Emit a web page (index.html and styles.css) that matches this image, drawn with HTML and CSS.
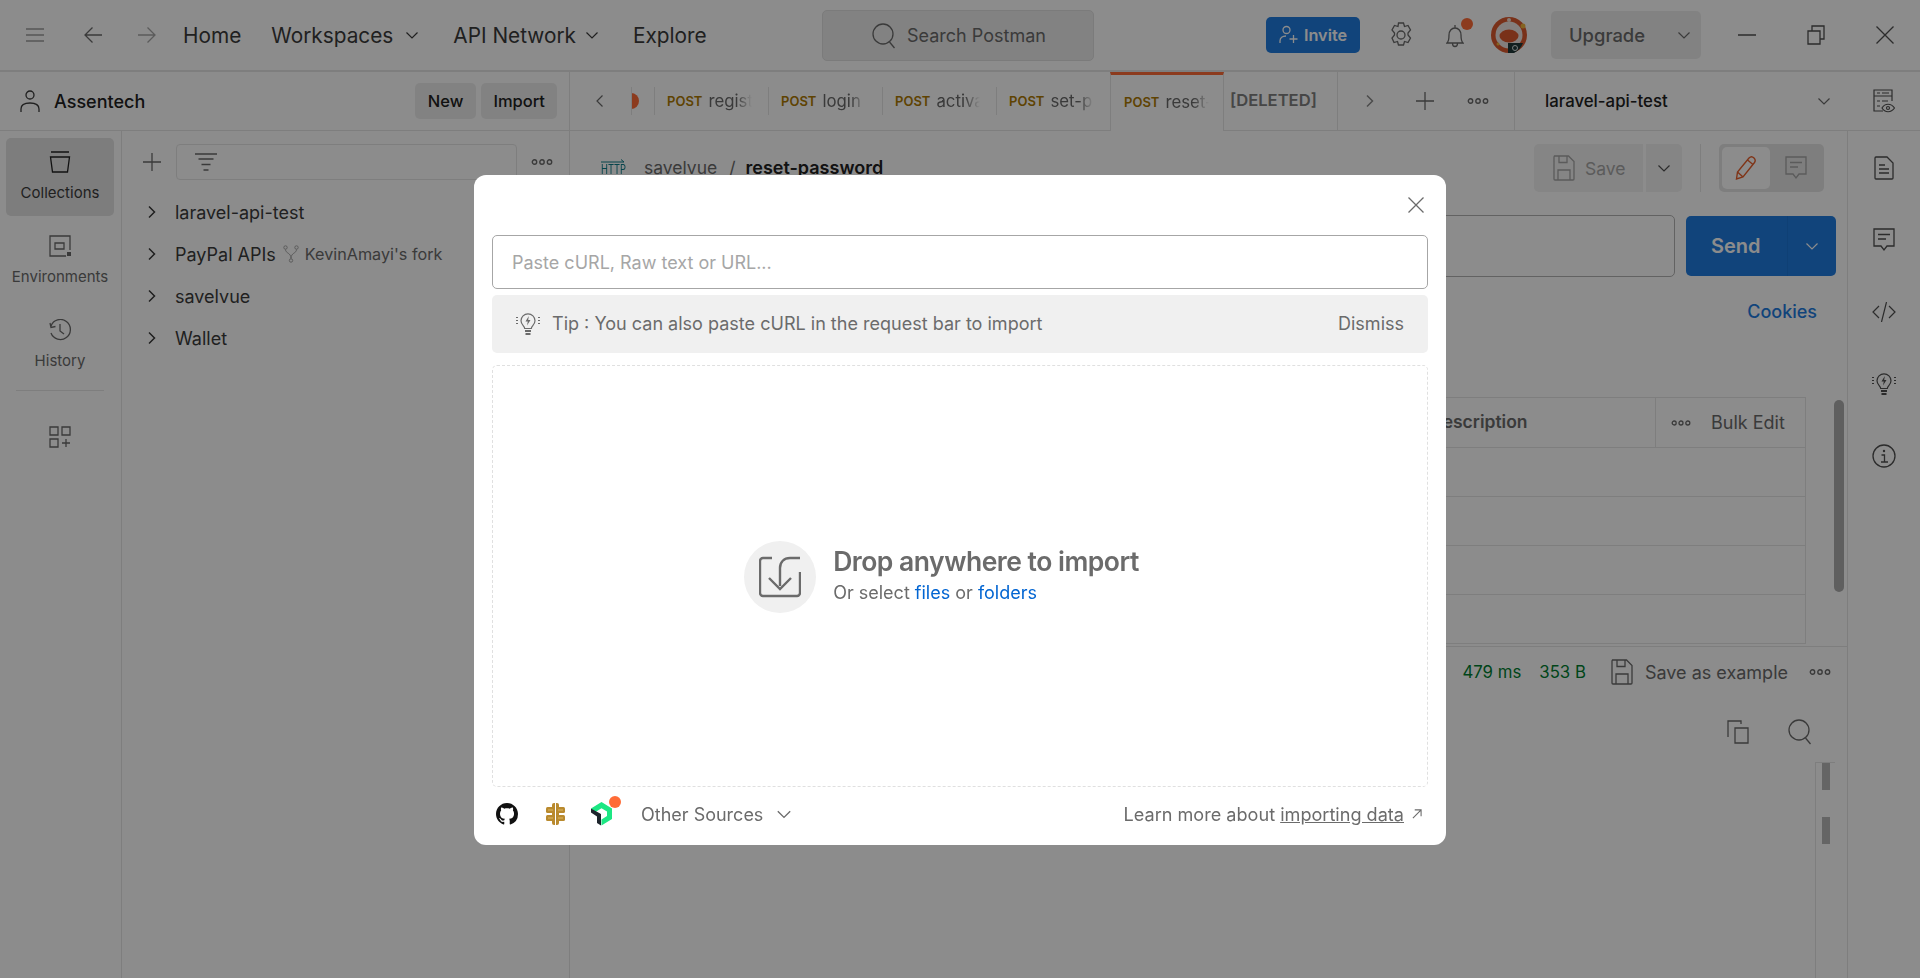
FILE: index.html
```html
<!DOCTYPE html>
<html lang="en">
<head>
    <meta charset="UTF-8">
    <title>Postman</title>
    <link rel="stylesheet" href="styles.css">
</head>
<body>
    <svg class="defs" width="0" height="0">
        <symbol id="chev-down" viewBox="0 0 16 16"><path d="M2.5 5.5 8 11l5.5-5.5" fill="none" stroke="currentColor" stroke-width="1.2"/></symbol>
        <symbol id="chev-right" viewBox="0 0 16 16"><path d="M5 2.5 10.5 8 5 13.500" fill="none" stroke="currentColor" stroke-width="1.5"/></symbol>
        <symbol id="chev-left" viewBox="0 0 16 16"><path d="M10.5 2.5 5 8l5.5 5.5" fill="none" stroke="currentColor" stroke-width="1.2"/></symbol>
        <symbol id="dots" viewBox="0 0 22 6"><g fill="none" stroke="currentColor" stroke-width="1.4"><circle cx="3.5" cy="3" r="2.2"/><circle cx="11" cy="3" r="2.2"/><circle cx="18.5" cy="3" r="2.2"/></g></symbol>
        <symbol id="plus" viewBox="0 0 18 18"><path d="M9 0v18M0 9h18" fill="none" stroke="currentColor" stroke-width="1.3"/></symbol>
        <symbol id="save" viewBox="0 0 22 26"><path d="M1.5 1h14l5.5 5.500V24a1 1 0 0 1-1 1H2a1 1 0 0 1-1-1V2zM6 1v6.500h8V1M5 25V15h12v10" fill="none" stroke="currentColor" stroke-width="1.3"/></symbol>
        <symbol id="comment" viewBox="0 0 22 24"><path d="M1 1h20v17h-7l-3 4-3-4H1zM5 6.5h12M5 11h8" fill="none" stroke="currentColor" stroke-width="1.3"/></symbol>
        <symbol id="search" viewBox="0 0 24 26"><circle cx="11" cy="11" r="10" fill="none" stroke="currentColor" stroke-width="1.3"/><path d="m17.5 19 5 6" fill="none" stroke="currentColor" stroke-width="1.3"/></symbol>
        <symbol id="bulb" viewBox="0 0 24 24"><g fill="none" stroke="currentColor" stroke-width="1.2"><path d="M8.700 16.500c0-2.500-3.700-3.700-3.700-7.700a7 7 0 0 1 14 0c0 4-3.700 5.200-3.700 7.700z"/><path d="M9 19h6M9.500 22h5" stroke-width="2"/><path d="M0 5.500h2M0 8.500h2M0 11.500h2M22 5.500h2M22 8.500h2M22 11.500h2"/></g><path d="M12.800 4 9.500 9.500h2.300l-.8 4 3.500-5.500h-2.300z" fill="currentColor"/></symbol>
    </svg>

    <div class="app">
        <header class="topbar">
            <svg class="ic-menu" width="18" height="14" viewBox="0 0 18 14"><path d="M0 1h18M0 7h18M0 13h18" stroke="currentColor" stroke-width="1.2"/></svg>
            <svg class="ic-back" width="18" height="18" viewBox="0 0 18 18"><path d="M18 9H1M8.5 1.5 1 9l7.5 7.5" fill="none" stroke="currentColor" stroke-width="1.3"/></svg>
            <svg class="ic-fwd" width="18" height="18" viewBox="0 0 18 18"><path d="M0 9h17M9.500 1.500 17 9l-7.500 7.500" fill="none" stroke="currentColor" stroke-width="1.3"/></svg>
            <nav class="topnav">
                <span class="nav-home">Home</span>
                <span class="nav-work">Workspaces<svg width="16" height="16"><use href="#chev-down"/></svg></span>
                <span class="nav-api">API Network<svg width="16" height="16"><use href="#chev-down"/></svg></span>
                <span class="nav-explore">Explore</span>
            </nav>
            <div class="searchbox">
                <svg width="24" height="26"><use href="#search"/></svg>
                <span>Search Postman</span>
            </div>
            <button class="invite">
                <svg width="20" height="20" viewBox="0 0 20 20"><g fill="none" stroke="currentColor" stroke-width="1.3"><circle cx="7.5" cy="5" r="3.5"/><path d="M1 18v-2c0-3 2.500-5 6-5M14.500 10v8M10.500 14h8"/></g></svg>
                Invite
            </button>
            <svg class="ic-gear" width="24" height="26" viewBox="0 0 24 26"><g fill="none" stroke="currentColor" stroke-width="1.3"><path d="M9.500 1h5l1 3.500 3.500-1 2.500 4.500-2.500 3v2l2.500 3-2.500 4.500-3.500-1-1 3.500h-5l-1-3.500-3.500 1L3 16l2.500-3v-2L3 8l2.500-4.500 3.500 1z"/><circle cx="12" cy="13" r="4"/></g></svg>
            <div class="bell">
                <svg width="18" height="24" viewBox="0 0 18 24"><path d="M1 19c2-2 2-4 2-8 0-4 2.500-7 6-7s6 3 6 7c0 4 0 6 2 8zM9 1v3M6.500 19.500a2.500 3 0 0 0 5 0" fill="none" stroke="currentColor" stroke-width="1.3"/></svg>
                <i class="badge"></i>
            </div>
            <svg class="avatar" width="36" height="36" viewBox="0 0 36 36"><circle cx="18" cy="18" r="18" fill="#dd5a2f"/><circle cx="18" cy="18" r="13.500" fill="#f0e8e4"/><ellipse cx="18" cy="19" rx="9.500" ry="6.500" fill="#dd5a2f"/><circle cx="18" cy="3" r="2" fill="#f4e2d6"/><circle cx="32" cy="9" r="2.500" fill="#f1b43c"/><circle cx="7" cy="27" r="1.500" fill="#f1b43c"/><path d="M17 26h15c-2 5-5 8-9 10h-6z" fill="#1f3a3a"/><circle cx="24" cy="31" r="2.500" fill="none" stroke="#dfe6e6"/></svg>
            <div class="upgrade"><span>Upgrade</span><svg width="16" height="16"><use href="#chev-down"/></svg></div>
            <div class="winbtns">
                <svg width="18" height="2"><path d="M0 1h18" stroke="currentColor" stroke-width="1.5"/></svg>
                <svg width="18" height="20" viewBox="0 0 18 20"><path d="M1 6h12v13H1zM5 6V1h12v13h-4" fill="none" stroke="currentColor" stroke-width="1.3"/></svg>
                <svg width="18" height="18" viewBox="0 0 18 18"><path d="m.5.5 17 17M17.500.5l-17 17" stroke="currentColor" stroke-width="1.3"/></svg>
            </div>
        </header>

        <div class="body">
            <aside class="left">
                <div class="ws-head">
                    <svg width="20" height="22" viewBox="0 0 20 22"><circle cx="10" cy="5" r="4" fill="none" stroke="currentColor" stroke-width="1.3"/><path d="M1 22v-3c0-4 4-6 9-6s9 2 9 6v3" fill="none" stroke="currentColor" stroke-width="1.3"/></svg>
                    <span class="ws-name">Assentech</span>
                    <button class="ws-btn btn-new">New</button>
                    <button class="ws-btn">Import</button>
                </div>
                <div class="left-body">
                    <div class="rail">
                        <div class="rail-item active">
                            <svg width="22" height="22" viewBox="0 0 22 22"><path d="M2 1h18M1.500 6h19l-2 15h-15z" fill="none" stroke="currentColor" stroke-width="1.3"/></svg>
                            <span>Collections</span>
                        </div>
                        <div class="rail-item">
                            <svg width="22" height="22" viewBox="0 0 22 22"><path d="M17 21H1V1h20v14" fill="none" stroke="currentColor" stroke-width="1.3"/><path d="M6 8h9v6H6z" fill="none" stroke="currentColor" stroke-width="1.3"/><path d="M18 17h4v4h-4z" fill="currentColor"/></svg>
                            <span>Environments</span>
                        </div>
                        <div class="rail-item">
                            <svg width="22" height="22" viewBox="0 0 22 22"><path d="M2 14a10 10 0 1 0 0-7M1 4l1 4.500 4.500-1M11 5v7l4 3" fill="none" stroke="currentColor" stroke-width="1.3"/></svg>
                            <span>History</span>
                        </div>
                        <div class="rail-sep"></div>
                        <svg class="rail-add" width="22" height="22" viewBox="0 0 22 22"><path d="M1 1h8v8H1zM13 1h8v8h-8zM1 13h8v8H1zM17 13v8M13 17h8" fill="none" stroke="currentColor" stroke-width="1.3"/></svg>
                    </div>
                    <div class="side">
                        <div class="side-tools">
                            <svg class="side-plus" width="18" height="18"><use href="#plus"/></svg>
                            <div class="filter">
                                <svg width="22" height="18" viewBox="0 0 22 18"><path d="M0 1h22M3.500 6h15M6.500 11.500h9M8.500 17h5" stroke="currentColor" stroke-width="1.3"/></svg>
                            </div>
                            <svg class="side-dots" width="22" height="6"><use href="#dots"/></svg>
                        </div>
                        <ul class="tree">
                            <li><svg width="16" height="16"><use href="#chev-right"/></svg>laravel-api-test</li>
                            <li><svg width="16" height="16"><use href="#chev-right"/></svg>PayPal APIs
                                <svg class="fork" width="16" height="18" viewBox="0 0 16 18"><g fill="none" stroke="currentColor"><circle cx="2.5" cy="2.5" r="1.700"/><circle cx="13.500" cy="2.5" r="1.700"/><circle cx="8" cy="15.500" r="1.700"/><path d="M2.500 4.500c0 4 5.500 3 5.500 9M13.500 4.500c0 4-5.500 3-5.500 9"/></g></svg>
                                <span class="fork-name">KevinAmayi's fork</span></li>
                            <li><svg width="16" height="16"><use href="#chev-right"/></svg>savelvue</li>
                            <li><svg width="16" height="16"><use href="#chev-right"/></svg>Wallet</li>
                        </ul>
                    </div>
                </div>
            </aside>

            <div class="right">
                <div class="tabbar">
                    <div class="tab-prev"><svg width="16" height="16"><use href="#chev-left"/></svg></div>
                    <div class="tab tab-cut"><i class="tab-dot"></i></div>
                    <div class="tab"><b>POST</b><span>regist</span></div>
                    <div class="tab"><b>POST</b><span>login</span></div>
                    <div class="tab"><b>POST</b><span>activa</span></div>
                    <div class="tab"><b>POST</b><span>set-p</span></div>
                    <div class="tab tab-active"><b>POST</b><span>reset-</span></div>
                    <div class="tab tab-deleted">[DELETED]</div>
                    <div class="tab-tools">
                        <svg class="tt-next" width="16" height="16"><use href="#chev-right"/></svg>
                        <svg class="tt-plus" width="18" height="18"><use href="#plus"/></svg>
                        <svg class="tt-dots" width="22" height="6"><use href="#dots"/></svg>
                    </div>
                    <div class="env">
                        <span>laravel-api-test</span>
                        <svg width="16" height="16"><use href="#chev-down"/></svg>
                    </div>
                    <svg class="env-eye" width="22" height="24" viewBox="0 0 22 24"><g fill="none" stroke="currentColor" stroke-width="1.2"><path d="M10 22H1V1h18v11"/><path d="M1 7h18M4 12h3M9 12h6M4 17h3M4 4h3M9 4h7"/><path d="M9 19c3-5 9-5 12.500 0-3.500 5-9.500 5-12.500 0z"/><circle cx="15" cy="19" r="1.5"/></g></svg>
                </div>

                <div class="lower">
                    <main class="main">
                        <div class="req-head">
                            <div class="crumb">
                                <div class="http">
                                    <svg width="24" height="4" viewBox="0 0 24 4"><path d="M0 3h23M20 .5 23 3" fill="none" stroke="currentColor"/></svg>
                                    <span>HTTP</span>
                                </div>
                                <span class="crumb-parent">savelvue</span>
                                <span class="crumb-slash">/</span>
                                <span class="crumb-cur">reset-password</span>
                            </div>
                            <div class="save-group">
                                <div class="save-btn"><svg width="22" height="26"><use href="#save"/></svg>Save</div>
                                <div class="save-more"><svg width="16" height="16"><use href="#chev-down"/></svg></div>
                            </div>
                            <div class="vsep"></div>
                            <div class="mode">
                                <div class="mode-on"><svg width="22" height="24" viewBox="0 0 22 24"><path d="M1.500 23 2.500 16 14 2c1.500-1.500 3.500-1.500 5 0s1.500 3 .5 4.500L8 21zM2.500 16 8 21M12.500 4l5.500 4.500" fill="none" stroke="currentColor" stroke-width="1.4"/></svg></div>
                                <svg class="mode-off" width="22" height="24"><use href="#comment"/></svg>
                            </div>
                        </div>
                        <div class="url-row">
                            <div class="url-input"></div>
                            <div class="send"><span>Send</span><div class="send-more"><svg width="16" height="16"><use href="#chev-down"/></svg></div></div>
                        </div>
                        <div class="cookies">Cookies</div>
                        <div class="params">
                            <div class="params-table">
                                <div class="p-row p-head"><span class="p-desc">Description</span><div class="p-bulk"><svg width="20" height="6"><use href="#dots"/></svg>Bulk Edit</div></div>
                                <div class="p-row"></div>
                                <div class="p-row"></div>
                                <div class="p-row"></div>
                                <div class="p-row"></div>
                            </div>
                            <div class="p-scroll"></div>
                        </div>
                        <div class="status">
                            <span class="ok">200 OK</span>
                            <span class="ok">479 ms</span>
                            <span class="ok">353 B</span>
                            <svg class="st-save" width="22" height="26"><use href="#save"/></svg>
                            <span class="save-ex">Save as example</span>
                            <svg width="22" height="6"><use href="#dots"/></svg>
                        </div>
                        <div class="resp-tools">
                            <svg width="22" height="24" viewBox="0 0 22 24"><path d="M8 8h13v15H8zM1 17V1h13v3" fill="none" stroke="currentColor" stroke-width="1.3"/></svg>
                            <svg width="24" height="26"><use href="#search"/></svg>
                        </div>
                        <div class="minimap"><i></i><i></i></div>
                    </main>
                    <aside class="rrail">
                        <svg width="20" height="24" viewBox="0 0 20 24"><path d="M1 2a1 1 0 0 1 1-1h11l6 6v15a1 1 0 0 1-1 1H2a1 1 0 0 1-1-1zM5 9h6M5 13h10M5 17h10" fill="none" stroke="currentColor" stroke-width="1.3"/></svg>
                        <svg width="22" height="24"><use href="#comment"/></svg>
                        <svg width="24" height="20" viewBox="0 0 24 20"><path d="M7 4 1 10l6 6M17 4l6 6-6 6M14.500 0l-5 20" fill="none" stroke="currentColor" stroke-width="1.2"/></svg>
                        <svg width="24" height="24"><use href="#bulb"/></svg>
                        <svg width="24" height="24" viewBox="0 0 24 24"><circle cx="12" cy="12" r="11" fill="none" stroke="currentColor" stroke-width="1.3"/><path d="M9.500 11h3v7M9 18h7" fill="none" stroke="currentColor" stroke-width="1.3"/><circle cx="12" cy="7" r="1.2" fill="currentColor"/></svg>
                    </aside>
                </div>
            </div>
        </div>
    </div>

    <div class="overlay">
        <div class="modal">
            <svg class="modal-close" width="16" height="16" viewBox="0 0 16 16"><path d="m.5.5 15 15M15.500.5l-15 15" stroke="currentColor" stroke-width="1.3"/></svg>
            <div class="paste">Paste cURL, Raw text or URL...</div>
            <div class="tip">
                <svg width="24" height="24"><use href="#bulb"/></svg>
                <span class="tip-text">Tip : You can also paste cURL in the request bar to import</span>
                <span class="tip-dismiss">Dismiss</span>
            </div>
            <div class="drop">
                <div class="drop-circle">
                    <svg width="42" height="42" viewBox="0 0 42 42"><path d="M13 2H4a3 3 0 0 0-3 3v32a3 3 0 0 0 3 3h34a3 3 0 0 0 3-3V16M41 2H31c-6 0-10 4-10 10v18M10 22l11 11 11-11" fill="none" stroke="currentColor" stroke-width="2.4"/></svg>
                </div>
                <div class="drop-text">
                    <div class="drop-title">Drop anywhere to import</div>
                    <div class="drop-sub">Or select <a>files</a> or <a>folders</a></div>
                </div>
            </div>
            <div class="modal-foot">
                <svg class="src-gh" width="22" height="22" viewBox="0 0 16 16"><path fill="#111" d="M8 0C3.580 0 0 3.580 0 8c0 3.540 2.290 6.530 5.470 7.590.4.070.55-.17.55-.38 0-.19-.01-.82-.01-1.490-2.010.37-2.530-.49-2.690-.94-.09-.23-.48-.94-.82-1.130-.28-.15-.68-.52-.01-.53.63-.01 1.080.58 1.230.82.720 1.210 1.870.87 2.330.66.070-.52.280-.87.510-1.070-1.780-.2-3.640-.89-3.640-3.950 0-.87.310-1.590.820-2.150-.08-.2-.36-1.020.08-2.120 0 0 .67-.21 2.200.82.640-.18 1.320-.27 2-.27s1.360.09 2 .27c1.530-1.040 2.200-.82 2.200-.82.440 1.100.16 1.920.08 2.120.51.560.82 1.270.82 2.150 0 3.070-1.870 3.750-3.650 3.950.29.250.54.730.54 1.480 0 1.070-.01 1.930-.01 2.200 0 .21.150.46.550.38A8.013 8.013 0 0 0 16 8c0-4.420-3.580-8-8-8z"/></svg>
                <svg class="src-sw" width="19" height="22" viewBox="0 0 19 22"><g fill="#b98a2e"><rect x="6" y="0" width="7" height="22" rx="2"/><rect x="0" y="4" width="19" height="6" rx="1.5"/><rect x="0" y="12" width="19" height="6" rx="1.5"/></g><path d="M9.500 0v22" stroke="#fff" stroke-width="1"/><path d="M2 7h5M12 15h5M12 7h5M2 15h5" stroke="#dcb765" stroke-width="1"/></svg>
                <div class="src-nr">
                    <svg width="21" height="24" viewBox="0 0 21 24"><path fill="#1ce783" d="M10.500 0 21 6.500V17L10.500 23.500v-6L16 14V9.500L10.500 6.300 4.500 10 0 6.500z"/><path fill="#1d252c" d="M0 6.500 10 12v11.500L6 21v-6.500L0 10.500z"/></svg>
                    <i class="badge"></i>
                </div>
                <span class="other">Other Sources<svg width="18" height="18"><use href="#chev-down"/></svg></span>
                <span class="learn">Learn more about <u>importing data</u><svg width="10" height="10" viewBox="0 0 11 11"><path d="M1 10 10 1M3 1h7v7" fill="none" stroke="currentColor" stroke-width="1.2"/></svg></span>
            </div>
        </div>
    </div>
</body>
</html>
```

FILE: styles.css
```css
* {
    box-sizing: border-box;
}

html, body {
    margin: 0;
    padding: 0;
    height: 100%;
    overflow: hidden;
}

body {
    font-family: 'Inter', sans-serif;
    font-size: 18px;
    color: #212121;
    background: #fff;
}

.defs {
    position: absolute;
}

svg {
    display: block;
    flex: none;
}

button {
    font-family: inherit;
    border: 0;
}

.app {
    width: 1920px;
    height: 978px;
    display: flex;
    flex-direction: column;
    color: #212121;
}

/* top bar */
.topbar {
    height: 72px;
    flex: none;
    display: flex;
    align-items: center;
    border-bottom: 2px solid #e6e6e6;
    color: #6b6b6b;
}

.ic-menu {
    margin-left: 26px;
}

.ic-back {
    margin-left: 40px;
}

.ic-fwd {
    margin-left: 36px;
    color: #a6a6a6;
}

.topnav {
    display: flex;
    align-items: center;
    font-size: 20.8px;
    color: #3b3b3b;
    margin-left: 27px;
    width: 639px;
}

.topnav span {
    display: flex;
    align-items: center;
}

.nav-work {
    margin-left: 30px;
}

.nav-work svg {
    margin-left: 11px;
}

.nav-api {
    margin-left: 33px;
}

.nav-api svg {
    margin-left: 8px;
}

.nav-explore {
    margin-left: 33px;
}

.searchbox {
    width: 272px;
    height: 51px;
    margin-top: 1px;
    display: flex;
    align-items: center;
    padding-left: 49px;
    gap: 11px;
    background: #ededed;
    border: 1px solid #e0e0e0;
    border-radius: 5px;
    font-size: 18px;
    color: #6b6b6b;
}

.invite {
    margin-left: 172px;
    width: 94px;
    height: 36px;
    display: flex;
    align-items: center;
    justify-content: center;
    gap: 5px;
    border-radius: 5px;
    background: #1f7ce0;
    color: #fff;
    font-size: 16.25px;
    font-weight: 600;
}

.ic-gear {
    margin-left: 29px;
}

.bell {
    position: relative;
    margin-left: 33px;
    margin-top: 1px;
}

.badge {
    position: absolute;
    top: -6px;
    right: -9px;
    width: 12px;
    height: 12px;
    border-radius: 50%;
    background: #ff6c37;
}

.avatar {
    margin-left: 27px;
}

.upgrade {
    margin-left: 24px;
    width: 150px;
    height: 48px;
    display: flex;
    align-items: center;
    padding-left: 18px;
    border-radius: 5px;
    background: #ededed;
    font-size: 18.4px;
    font-weight: 500;
    color: #6b6b6b;
}

.upgrade svg {
    margin-left: 31px;
}

.winbtns {
    display: flex;
    align-items: center;
    margin-left: 37px;
    gap: 51px;
    color: #505050;
}

/* body */
.body {
    flex: 1;
    display: flex;
    min-height: 0;
}

.left {
    width: 570px;
    flex: none;
    display: flex;
    flex-direction: column;
    border-right: 1px solid #e6e6e6;
}

.ws-head {
    height: 59px;
    flex: none;
    display: flex;
    align-items: center;
    padding: 0 12px 0 20px;
    border-bottom: 1px solid #e6e6e6;
    color: #3b3b3b;
}

.ws-name {
    margin-left: 14px;
    flex: 1;
    font-size: 18px;
    font-weight: 500;
    color: #212121;
}

.ws-btn {
    height: 36px;
    padding: 0 12px;
    border-radius: 5px;
    background: #ededed;
    font-size: 16.5px;
    font-weight: 500;
    color: #212121;
}

.btn-new {
    margin-right: 5px;
    padding: 0 13px;
}

.left-body {
    flex: 1;
    display: flex;
}

.rail {
    width: 122px;
    flex: none;
    display: flex;
    flex-direction: column;
    align-items: center;
    padding: 7px 1px 0 0;
    border-right: 1px solid #e6e6e6;
    color: #6b6b6b;
}

.rail-item {
    width: 108px;
    height: 78px;
    margin-bottom: 6px;
    display: flex;
    flex-direction: column;
    align-items: center;
    padding-top: 13px;
    gap: 10px;
    border-radius: 5px;
    font-size: 15px;
}

.rail-item.active {
    background: #e3e3e3;
    color: #212121;
}

.rail-item.active span {
    color: #3b3b3b;
}

.rail-sep {
    width: 88px;
    height: 1px;
    background: #e6e6e6;
}

.rail-add {
    margin-top: 35px;
}

.side {
    flex: 1;
    min-width: 0;
}

.side-tools {
    height: 48px;
    margin-top: 7px;
    display: flex;
    align-items: center;
    color: #6b6b6b;
}

.side-plus {
    margin-left: 21px;
}

.filter {
    width: 341px;
    height: 36px;
    margin-left: 15px;
    display: flex;
    align-items: center;
    padding-left: 18px;
    border: 1px solid #e6e6e6;
    border-radius: 4px;
}

.side-dots {
    margin-left: 14px;
}

.tree {
    list-style: none;
    margin: 5px 0 0;
    padding: 0;
}

.tree li {
    height: 42px;
    display: flex;
    align-items: center;
    padding-left: 22px;
    gap: 15px;
    color: #3b3b3b;
}

.tree .fork {
    margin-left: -8px;
    color: #a6a6a6;
}

.tree .fork-name {
    margin-left: -9px;
    font-size: 16.2px;
    color: #6b6b6b;
}

/* right side */
.right {
    flex: 1;
    min-width: 0;
    display: flex;
    flex-direction: column;
}

.tabbar {
    height: 59px;
    flex: none;
    display: flex;
    align-items: center;
    border-bottom: 1px solid #e6e6e6;
}

.tab-prev {
    width: 61px;
    padding-left: 22px;
    color: #6b6b6b;
}

.tab {
    width: 114px;
    height: 100%;
    display: flex;
    align-items: center;
    padding: 0 0 0 13px;
    overflow: hidden;
    position: relative;
    white-space: nowrap;
    font-size: 16.8px;
    color: #6b6b6b;
}

.tab::before {
    content: "";
    position: absolute;
    left: 0;
    top: 15px;
    bottom: 15px;
    width: 1px;
    background: #e6e6e6;
}

.tab b {
    font-size: 13px;
    font-weight: 600;
    color: #ad7a03;
    margin-right: 6px;
    flex: none;
}

.tab span {
    width: 44px;
    overflow: hidden;
    flex: none;
    -webkit-mask-image: linear-gradient(to right, #000 65%, transparent 100%);
    mask-image: linear-gradient(to right, #000 65%, transparent 100%);
}

.tab-cut {
    width: 23px;
    padding: 0;
}

.tab-dot {
    width: 16px;
    height: 16px;
    margin-left: -8px;
    border-radius: 50%;
    background: #ff6c37;
}

.tab-active {
    height: 59px;
    width: 114px;
    background: #fff;
    margin-bottom: -1px;
    border-top: 3px solid #ff6c37;
    border-left: 1px solid #e6e6e6;
    border-right: 1px solid #e6e6e6;
    padding-bottom: 2px;
}

.tab-active::before, .tab-deleted::before {
    display: none;
}

.tab-deleted {
    width: 114px;
    padding: 0 0 2px 6px;
    font-weight: 600;
    font-size: 16.6px;
    color: #808080;
    border-right: 1px solid #e6e6e6;
}

.tab-tools {
    width: 177px;
    height: 100%;
    flex: none;
    display: flex;
    align-items: center;
    border-right: 1px solid #e6e6e6;
    color: #6b6b6b;
}

.tt-next {
    margin-left: 24px;
    color: #8a8a8a;
}

.tt-plus {
    margin-left: 38px;
}

.tt-dots {
    margin-left: 33px;
}

.env {
    flex: 1;
    display: flex;
    align-items: center;
    justify-content: space-between;
    padding: 0 14px 0 30px;
    font-size: 16.8px;
    font-weight: 500;
}

.env svg {
    color: #6b6b6b;
}

.env-eye {
    margin-right: 25px;
    margin-left: 27px;
    color: #505050;
}

.lower {
    flex: 1;
    display: flex;
    min-height: 0;
}

.main {
    flex: 1;
    min-width: 0;
    color: #6b6b6b;
}

.req-head {
    height: 48px;
    margin-top: 13px;
    display: flex;
    align-items: center;
    padding-left: 31px;
}

.crumb {
    flex: 1;
    display: flex;
    align-items: center;
    font-size: 17.5px;
    padding-bottom: 2px;
}

.http {
    width: 26px;
    margin-right: 17px;
    color: #0a7c8a;
}

.http span {
    display: block;
    font-size: 13px;
    line-height: 13px;
    transform: scaleX(0.72);
    transform-origin: left center;
    white-space: nowrap;
}

.crumb-slash {
    margin: 0 10px 0 12px;
}

.crumb-cur {
    color: #212121;
    font-size: 18px;
    font-weight: 600;
}

.save-group {
    display: flex;
    height: 48px;
    gap: 3px;
    color: #a6a6a6;
}

.save-btn {
    width: 109px;
    display: flex;
    align-items: center;
    padding-left: 19px;
    gap: 10px;
    background: #f2f2f2;
    border-radius: 5px 0 0 5px;
    font-size: 17.5px;
}

.save-more {
    width: 36px;
    display: flex;
    align-items: center;
    justify-content: center;
    background: #f2f2f2;
    border-radius: 0 5px 5px 0;
    color: #505050;
}

.vsep {
    width: 1px;
    height: 48px;
    margin: 0 18px;
    background: #e6e6e6;
}

.mode {
    width: 105px;
    height: 48px;
    margin-right: 23px;
    display: flex;
    align-items: center;
    padding-left: 3px;
    border-radius: 5px;
    background: #e6e6e6;
}

.mode-on {
    width: 48px;
    height: 42px;
    display: flex;
    align-items: center;
    justify-content: center;
    border-radius: 5px;
    background: #fff;
    color: #e8602c;
}

.mode-off {
    margin-left: 15px;
    color: #a6a6a6;
}

.url-row {
    margin-top: 23px;
    height: 62px;
    display: flex;
    align-items: center;
    padding-right: 11px;
}

.url-input {
    margin-left: 30px;
    flex: 1;
    height: 62px;
    border: 1px solid #b3b3b3;
    border-radius: 5px;
}

.send {
    margin-left: 11px;
    width: 150px;
    height: 60px;
    display: flex;
    align-items: center;
    border-radius: 5px;
    background: #1f7ce0;
    color: #fff;
    font-size: 20px;
    font-weight: 600;
}

.send span {
    width: 101px;
    padding-left: 25px;
}

.send-more {
    flex: 1;
    height: 100%;
    display: flex;
    align-items: center;
    justify-content: center;
    border-left: 1px solid #1d75d6;
}

.cookies {
    margin-top: 25px;
    height: 20px;
    line-height: 20px;
    text-align: right;
    padding-right: 30px;
    color: #1f7ce0;
    font-weight: 500;
    font-size: 18px;
}

.params {
    position: relative;
    margin-top: 75px;
    height: 250px;
    padding: 0 41px 0 30px;
    border-bottom: 1px solid #e6e6e6;
}

.params-table {
    border: 1px solid #e6e6e6;
    border-bottom: 0;
}

.p-row {
    height: 49px;
    border-bottom: 1px solid #e6e6e6;
}

.p-head {
    height: 50px;
    display: flex;
    align-items: stretch;
    justify-content: space-between;
    padding-left: 829px;
    font-weight: 600;
    font-size: 17.5px;
}

.p-desc {
    align-self: center;
    padding-bottom: 2px;
}

.p-bulk {
    width: 150px;
    display: flex;
    align-items: center;
    gap: 20px;
    padding-left: 15px;
    border-left: 1px solid #e6e6e6;
    font-size: 18px;
    font-weight: 400;
    white-space: nowrap;
}

.p-scroll {
    position: absolute;
    top: 3px;
    right: 3px;
    width: 10px;
    height: 192px;
    border-radius: 5px;
    background: #adadad;
}

.status {
    height: 50px;
    display: flex;
    align-items: center;
    justify-content: flex-end;
    padding-right: 16px;
    font-size: 18px;
}

.status .ok {
    font-size: 16.8px;
    color: #007f31;
    margin-right: 18px;
    white-space: nowrap;
}

.st-save {
    margin-left: 7px;
}

.save-ex {
    margin-left: 12px;
    margin-right: 21px;
}

.resp-tools {
    height: 48px;
    margin-top: 11px;
    display: flex;
    align-items: center;
    justify-content: flex-end;
    padding-right: 35px;
    gap: 39px;
}

.minimap {
    margin: 6px 12px 0 auto;
    width: 20px;
    height: 216px;
    border-left: 1px solid #e6e6e6;
    border-top: 1px solid #e6e6e6;
    padding-left: 6px;
    display: flex;
    flex-direction: column;
    gap: 27px;
}

.minimap i {
    display: block;
    width: 8px;
    height: 27px;
    background: #b8b8b8;
}

.rrail {
    width: 73px;
    flex: none;
    display: grid;
    grid-auto-rows: 72px;
    align-content: start;
    align-items: center;
    justify-items: center;
    padding-top: 1px;
    border-left: 1px solid #e6e6e6;
    color: #505050;
}

/* import modal */
.overlay {
    position: fixed;
    inset: 0;
    background: rgba(0, 0, 0, 0.45);
    display: flex;
    align-items: flex-start;
    justify-content: center;
    padding-top: 175px;
}

.modal {
    position: relative;
    width: 972px;
    height: 670px;
    padding: 60px 18px 0;
    background: #fff;
    border-radius: 12px;
    font-size: 18px;
    color: #6b6b6b;
    display: flex;
    flex-direction: column;
}

.modal-close {
    position: absolute;
    top: 22px;
    right: 22px;
}

.paste {
    height: 54px;
    display: flex;
    align-items: center;
    padding-left: 19px;
    border: 1px solid #a6a6a6;
    border-radius: 5px;
    color: #a6a6a6;
}

.tip {
    margin-top: 6px;
    height: 58px;
    flex: none;
    display: flex;
    align-items: center;
    padding: 0 24px 1px;
    gap: 12px;
    background: #f0f0f0;
    border-radius: 5px;
}

.tip-text {
    flex: 1;
    font-size: 18.05px;
}

.drop {
    margin-top: 12px;
    height: 422px;
    flex: none;
    display: flex;
    align-items: center;
    justify-content: center;
    gap: 17px;
    border: 1px dashed #e0e0e0;
    border-radius: 5px;
    padding: 1px 37px 0 0;
}

.drop-circle {
    width: 72px;
    height: 72px;
    display: flex;
    align-items: center;
    justify-content: center;
    border-radius: 50%;
    background: #f0f0f0;
}

.drop-text {
    margin-top: -7px;
}

.drop-title {
    font-size: 26.5px;
    font-weight: 600;
    letter-spacing: -0.5px;
    line-height: 36px;
}

.drop-sub {
    margin-top: 3px;
    font-size: 18px;
}

.drop-sub a {
    color: #0265d2;
}

.modal-foot {
    flex: 1;
    display: flex;
    align-items: center;
    padding: 0 6px 4px 4px;
}

.src-sw {
    margin-left: 28px;
}

.src-nr {
    position: relative;
    margin-left: 26px;
}

.other {
    margin-left: 29px;
    display: flex;
    align-items: center;
    gap: 12px;
    flex: 1;
}

.learn {
    display: flex;
    align-items: center;
    white-space: pre;
    font-size: 18.1px;
}

.learn svg {
    margin-left: 8px;
}
```
